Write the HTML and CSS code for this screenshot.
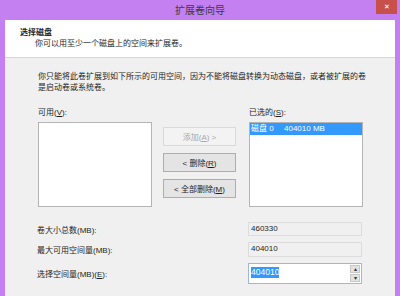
FILE: index.html
```html
<!DOCTYPE html>
<html lang="zh-CN">
<head>
    <meta charset="UTF-8">
    <title>扩展卷向导</title>
    <link rel="stylesheet" href="styles.css">
</head>
<body>
    <div class="window">
        <div class="titlebar">
            <span></span>
            <span class="title">扩展卷向导</span>
            <span class="close-btn">✕</span>
        </div>

        <div class="frame">
            <div class="header">
                <div class="header-title">选择磁盘</div>
                <div class="header-desc">你可以用至少一个磁盘上的空间来扩展卷。</div>
            </div>

            <div class="content">
                <p class="intro">你只能将此卷扩展到如下所示的可用空间，因为不能将磁盘转换为动态磁盘，或者被扩展的卷<br>是启动卷或系统卷。</p>

                <div class="picker">
                    <div class="col">
                        <div class="col-label">可用(<u>V</u>):</div>
                        <div class="listbox"></div>
                    </div>

                    <div class="buttons">
                        <button class="btn" disabled>添加(<u>A</u>) &gt;</button>
                        <button class="btn">&lt; 删除(<u>R</u>)</button>
                        <button class="btn">&lt; 全部删除(<u>M</u>)</button>
                    </div>

                    <div class="col">
                        <div class="col-label">已选的(<u>S</u>):</div>
                        <div class="listbox">
                            <div class="list-item selected">
                                <span class="disk-name">磁盘 0</span>
                                <span>404010 MB</span>
                            </div>
                        </div>
                    </div>
                </div>

                <div class="fields">
                    <div class="field-row">
                        <label>卷大小总数(MB):</label>
                        <div class="textbox readonly">460330</div>
                    </div>
                    <div class="field-row">
                        <label>最大可用空间量(MB):</label>
                        <div class="textbox readonly tall">404010</div>
                    </div>
                    <div class="field-row">
                        <label>选择空间量(MB)(<u>E</u>):</label>
                        <div class="spinbox">
                            <span class="spin-value">404010</span>
                            <div class="spin-buttons">
                                <span class="spin-btn">▴</span>
                                <span class="spin-btn">▾</span>
                            </div>
                        </div>
                    </div>
                </div>
            </div>
        </div>
    </div>
</body>
</html>
```

FILE: styles.css
```css
/* Janela do assistente */
body {
    margin: 0;
    padding: 0;
    background-color: #c480f0;
    font-family: "Liberation Sans", "Noto Sans CJK SC", sans-serif;
    font-size: 8px;
    color: #1e1e1e;
}

.window {
    width: 400px;
    height: 296px;
    display: flex;
    flex-direction: column;
}

.titlebar {
    height: 20px;
    display: grid;
    grid-template-columns: 1fr auto 1fr;
    align-items: start;
}

.title {
    font-size: 10px;
    line-height: 22px;
    color: #3a3a3a;
}

.close-btn {
    justify-self: end;
    width: 21px;
    height: 14px;
    margin-right: 3px;
    background-color: #c8504b;
    color: #fff;
    font-size: 7px;
    line-height: 14px;
    text-align: center;
}

.frame {
    flex: 1;
    margin: 0 5px;
    display: flex;
    flex-direction: column;
}

/* Cabeçalho branco */
.header {
    height: 38px;
    background-color: #fff;
    border-bottom: 1px solid #d6d6d6;
    padding: 7px 0 0 15px;
    box-sizing: border-box;
    line-height: 11px;
}

.header-title {
    font-weight: bold;
}

.header-desc {
    padding-left: 15px;
}

/* Conteúdo */
.content {
    flex: 1;
    background-color: #f0f0f0;
    padding: 13px 0 0 33px;
}

.intro {
    margin: 0;
    line-height: 11px;
}

.picker {
    display: flex;
    margin-top: 14px;
}

.col {
    width: 114px;
    display: flex;
    flex-direction: column;
}

.col-label {
    line-height: 11px;
    height: 15px;
}

.listbox {
    height: 85px;
    background-color: #fff;
    border: 1px solid #b4b4b4;
    box-sizing: border-box;
}

.list-item {
    height: 12px;
    line-height: 12px;
    padding-left: 1px;
    display: flex;
}

.list-item.selected {
    background-color: #3399ff;
    color: #fff;
}

.disk-name {
    width: 33px;
}

.buttons {
    width: 73px;
    margin: 20px 13px 0 11px;
    display: flex;
    flex-direction: column;
    gap: 7px;
}

.btn {
    height: 19px;
    padding: 0;
    font-family: inherit;
    font-size: 8px;
    color: #1e1e1e;
    background-color: #e4e4e4;
    border: 1px solid #adadad;
}

.btn:disabled {
    background-color: #f3f3f3;
    border-color: #dadada;
    color: #a8a8a8;
}

/* Campos inferiores */
.fields {
    margin-top: 15px;
    display: flex;
    flex-direction: column;
    gap: 6px;
}

.field-row {
    display: flex;
    align-items: center;
}

.field-row label {
    width: 211px;
    margin-left: -1px;
}

.textbox {
    width: 114px;
    height: 14px;
    line-height: 12px;
    padding-left: 2px;
    box-sizing: border-box;
    border: 1px solid #dcdcdc;
}

.textbox.readonly {
    background-color: #f0f0f0;
}

.textbox.tall {
    height: 15px;
}

.spinbox {
    width: 114px;
    height: 21px;
    box-sizing: border-box;
    background-color: #fff;
    border: 1px solid #9db8d8;
    display: flex;
    align-items: center;
    justify-content: space-between;
    padding: 0 1px 0 2px;
}

.spin-value {
    background-color: #3399ff;
    color: #fff;
    font-size: 8.5px;
    line-height: 11px;
    margin-bottom: 3px;
}

.spin-buttons {
    display: flex;
    flex-direction: column;
    gap: 1px;
}

.spin-btn {
    width: 10px;
    height: 8px;
    background-color: #e2e2e2;
    border: 1px solid #c8c8c8;
    box-sizing: border-box;
    font-size: 6px;
    line-height: 6px;
    text-align: center;
    color: #333;
}
```
